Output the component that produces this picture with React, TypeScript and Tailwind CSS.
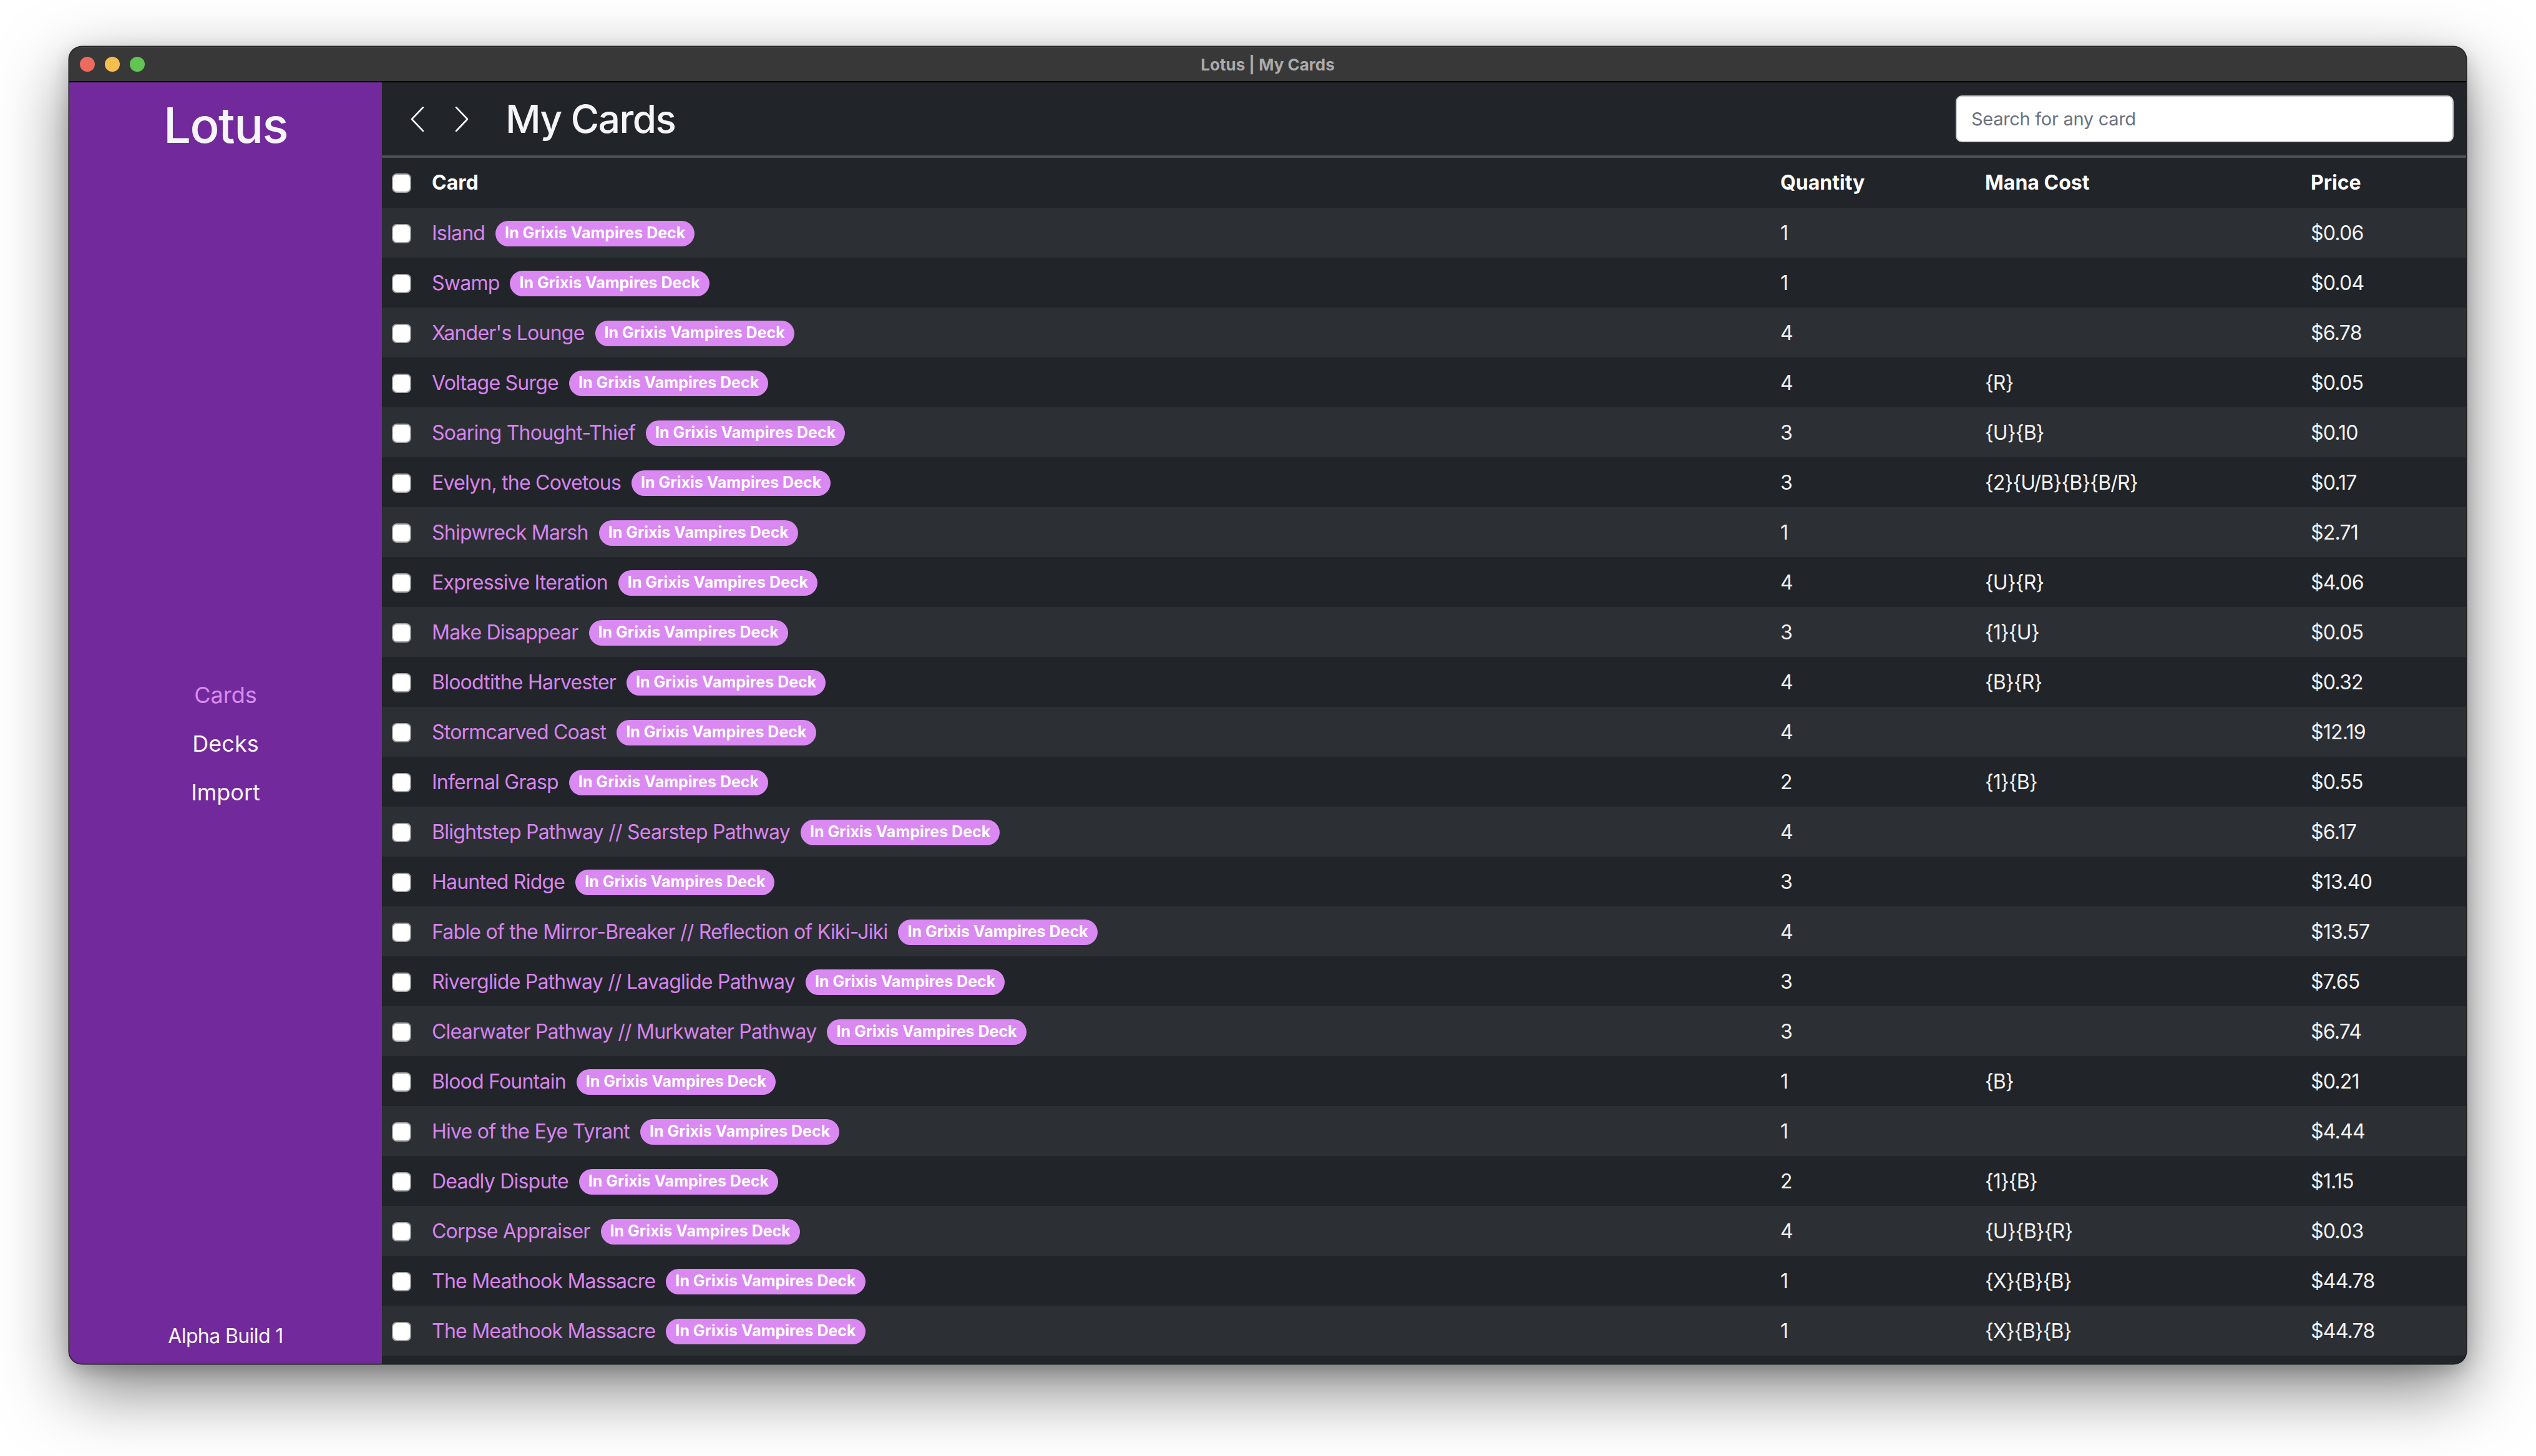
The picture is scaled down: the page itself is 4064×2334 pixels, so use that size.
import React from 'react';

type CardRow = {
  name: string;
  qty: number;
  mana: string;
  price: string;
};

const cards: CardRow[] = [
  { name: 'Island', qty: 1, mana: '', price: '$0.06' },
  { name: 'Swamp', qty: 1, mana: '', price: '$0.04' },
  { name: "Xander's Lounge", qty: 4, mana: '', price: '$6.78' },
  { name: 'Voltage Surge', qty: 4, mana: '{R}', price: '$0.05' },
  { name: 'Soaring Thought-Thief', qty: 3, mana: '{U}{B}', price: '$0.10' },
  { name: 'Evelyn, the Covetous', qty: 3, mana: '{2}{U/B}{B}{B/R}', price: '$0.17' },
  { name: 'Shipwreck Marsh', qty: 1, mana: '', price: '$2.71' },
  { name: 'Expressive Iteration', qty: 4, mana: '{U}{R}', price: '$4.06' },
  { name: 'Make Disappear', qty: 3, mana: '{1}{U}', price: '$0.05' },
  { name: 'Bloodtithe Harvester', qty: 4, mana: '{B}{R}', price: '$0.32' },
  { name: 'Stormcarved Coast', qty: 4, mana: '', price: '$12.19' },
  { name: 'Infernal Grasp', qty: 2, mana: '{1}{B}', price: '$0.55' },
  { name: 'Blightstep Pathway // Searstep Pathway', qty: 4, mana: '', price: '$6.17' },
  { name: 'Haunted Ridge', qty: 3, mana: '', price: '$13.40' },
  { name: 'Fable of the Mirror-Breaker // Reflection of Kiki-Jiki', qty: 4, mana: '', price: '$13.57' },
  { name: 'Riverglide Pathway // Lavaglide Pathway', qty: 3, mana: '', price: '$7.65' },
  { name: 'Clearwater Pathway // Murkwater Pathway', qty: 3, mana: '', price: '$6.74' },
  { name: 'Blood Fountain', qty: 1, mana: '{B}', price: '$0.21' },
  { name: 'Hive of the Eye Tyrant', qty: 1, mana: '', price: '$4.44' },
  { name: 'Deadly Dispute', qty: 2, mana: '{1}{B}', price: '$1.15' },
  { name: 'Corpse Appraiser', qty: 4, mana: '{U}{B}{R}', price: '$0.03' },
  { name: 'The Meathook Massacre', qty: 1, mana: '{X}{B}{B}', price: '$44.78' },
  { name: 'The Meathook Massacre', qty: 1, mana: '{X}{B}{B}', price: '$44.78' },
];

const Checkbox: React.FC = () => (
  <span className="block w-[31px] h-[31px] shrink-0 rounded-[8px] bg-white border-2 border-[#a3a3a3]" />
);

const Chevron: React.FC<{ dir: 'left' | 'right' }> = ({ dir }) => (
  <svg width="22" height="40" viewBox="0 0 22 40" fill="none">
    <polyline
      points={dir === 'left' ? '20,1 2,20 20,39' : '2,1 20,20 2,39'}
      stroke="#f5f5f7"
      strokeWidth="2.6"
      strokeLinecap="round"
      strokeLinejoin="round"
    />
  </svg>
);

const Sidebar: React.FC = () => (
  <aside className="w-[501px] shrink-0 bg-[#71299b] flex flex-col items-center text-[#f5f5f7]">
    <div className="pt-[30px] text-[78px] leading-none font-medium tracking-[-1.5px]">Lotus</div>
    <nav className="mt-[835px] flex flex-col items-center text-[36px] leading-[78px]">
      <span className="text-[#d98bef]">Cards</span>
      <span>Decks</span>
      <span>Import</span>
    </nav>
    <div className="mt-auto pb-[20px] text-[32px] leading-[48px] tracking-[-0.6px]">Alpha Build 1</div>
  </aside>
);

const TableHeader: React.FC = () => (
  <div className="h-[80px] flex items-center pl-4 bg-[#212428] text-[32px] font-bold text-white">
    <Checkbox />
    <div className="ml-[33px] flex-1">Card</div>
    <div className="w-[328px]">Quantity</div>
    <div className="w-[522px]">Mana Cost</div>
    <div className="w-[249px]">Price</div>
  </div>
);

const Row: React.FC<{ card: CardRow; odd: boolean }> = ({ card, odd }) => (
  <div
    className={`h-[80px] flex items-center pl-4 pt-[2px] text-[32px] tracking-[-0.024em] text-[#f2f2f2] ${
      odd ? 'bg-[#2c2f34]' : 'bg-[#212428]'
    }`}
  >
    <Checkbox />
    <div className="ml-[33px] flex-1 flex items-center gap-[17px]">
      <span className="text-[#d884ef] whitespace-nowrap">{card.name}</span>
      <span className="h-[41px] px-[15px] flex items-center rounded-full bg-[#da88f2] text-white text-[25px] font-bold tracking-normal whitespace-nowrap">
        In Grixis Vampires Deck
      </span>
    </div>
    <div className="w-[328px]">{card.qty}</div>
    <div className="w-[522px]">{card.mana}</div>
    <div className="w-[249px]">{card.price}</div>
  </div>
);

export default function App() {
  return (
    <div className="w-[4064px] h-[2334px] bg-white pl-[111px] pt-[75px] font-['Inter','Noto_Sans',sans-serif]">
      <div className="w-[3841px] h-[2111px] rounded-[20px] overflow-hidden flex flex-col bg-[#212428] shadow-[0_0_0_1.5px_rgba(0,0,0,0.85),0_40px_110px_rgba(0,0,0,0.5),0_10px_30px_rgba(0,0,0,0.2)]">
        <div className="h-[57px] shrink-0 grid grid-cols-[1fr_auto_1fr] items-center bg-[#383838] border-b-2 border-black border-t border-t-[#5a5a5a]">
          <div className="flex items-center gap-4 pl-[17px]">
            <span className="w-[24px] h-[24px] rounded-full bg-[#ec6a5e]" />
            <span className="w-[24px] h-[24px] rounded-full bg-[#f4bf4f]" />
            <span className="w-[24px] h-[24px] rounded-full bg-[#61c554]" />
          </div>
          <div className="text-[26px] font-bold text-[#ababab]">Lotus | My Cards</div>
          <div />
        </div>
        <div className="flex flex-1 min-h-0">
          <Sidebar />
          <main className="flex-1 flex flex-col min-w-0 overflow-hidden bg-[#212428]">
            <header className="h-[121px] shrink-0 flex items-center pl-[46px] pr-[20px] border-b-4 border-[#4b4e53]">
              <Chevron dir="left" />
              <div className="ml-[49px]">
                <Chevron dir="right" />
              </div>
              <h1 className="ml-[59px] text-[62px] font-medium text-[#f5f5f7] tracking-[-1.5px]">My Cards</h1>
              <div className="ml-auto w-[798px] h-[75px] rounded-[10px] bg-white border-2 border-[#c9cdd3] flex items-center pl-[23px] text-[29px] text-[#6b7280] tracking-[-0.3px]">
                Search for any card
              </div>
            </header>
            <TableHeader />
            {cards.map((c, i) => (
              <Row key={i} card={c} odd={i % 2 === 0} />
            ))}
          </main>
        </div>
      </div>
    </div>
  );
}
